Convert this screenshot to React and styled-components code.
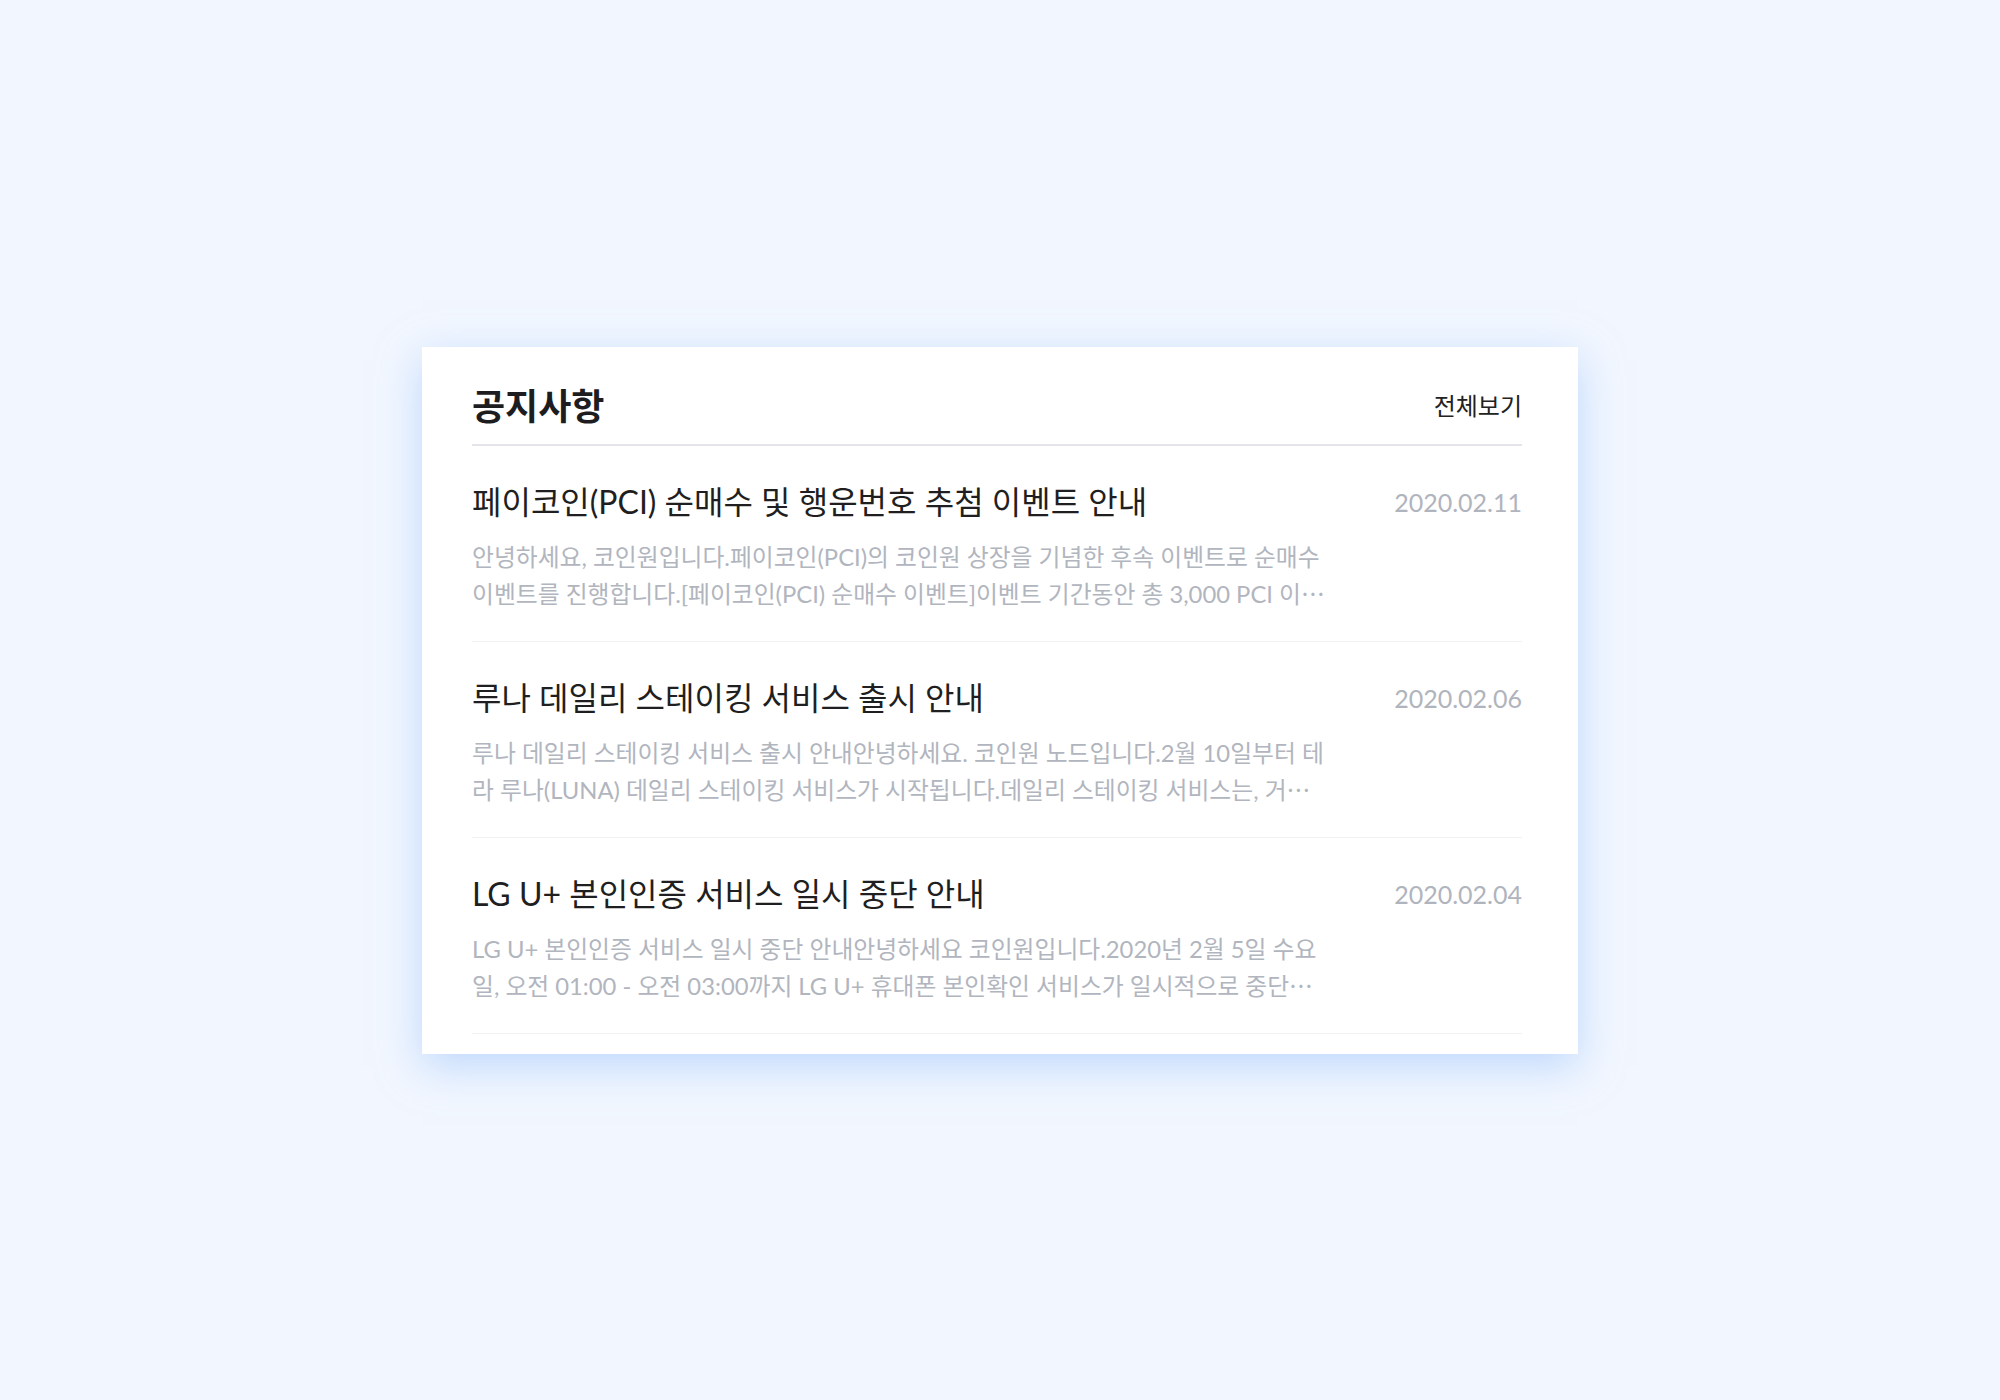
import React from "react";
import styled, { createGlobalStyle } from "styled-components";

const notices = [
  {
    id: 1,
    title: "페이코인(PCI) 순매수 및 행운번호 추첨 이벤트 안내",
    date: "2020.02.11",
    preview:
      "안녕하세요, 코인원입니다.페이코인(PCI)의 코인원 상장을 기념한 후속 이벤트로 순매수 이벤트를 진행합니다.[페이코인(PCI) 순매수 이벤트]이벤트 기간동안 총 3,000 PCI 이",
  },
  {
    id: 2,
    title: "루나 데일리 스테이킹 서비스 출시 안내",
    date: "2020.02.06",
    preview:
      "루나 데일리 스테이킹 서비스 출시 안내안녕하세요. 코인원 노드입니다.2월 10일부터 테라 루나(LUNA) 데일리 스테이킹 서비스가 시작됩니다.데일리 스테이킹 서비스는, 거",
  },
  {
    id: 3,
    title: "LG U+ 본인인증 서비스 일시 중단 안내",
    date: "2020.02.04",
    preview:
      "LG U+ 본인인증 서비스 일시 중단 안내안녕하세요 코인원입니다.2020년 2월 5일 수요일, 오전 01:00 - 오전 03:00까지 LG U+ 휴대폰 본인확인 서비스가 일시적으로 중단",
  },
];

const GlobalStyle = createGlobalStyle`
  * {
    box-sizing: border-box;
  }
  body {
    margin: 0;
    background: #f2f7ff;
    font-family: Lato, "Noto Sans CJK KR", sans-serif;
  }
`;

const Page = styled.div`
  height: 100vh;
  display: flex;
  align-items: center;
  justify-content: center;
`;

const Card = styled.section`
  width: 1156px;
  padding: 0 56px 20px 50px;
  background: #fff;
  box-shadow: 0 12px 40px rgba(140, 185, 250, 0.5);
`;

const Header = styled.header`
  display: flex;
  justify-content: space-between;
  align-items: center;
  padding: 39px 0 18px;
  border-bottom: 2px solid #e4e4eb;
`;

const Heading = styled.h2`
  margin: 0;
  font-size: 36px;
  line-height: 40px;
  font-weight: 700;
  color: #1d1d1f;
`;

const MoreLink = styled.a`
  font-size: 24px;
  line-height: 40px;
  color: #222;
  text-decoration: none;
  cursor: pointer;
`;

const List = styled.ul`
  margin: 0;
  padding: 0;
  list-style: none;
`;

const Item = styled.li`
  padding: 36px 0 29px;
  border-bottom: 1px solid #f2f2f5;
`;

const TitleRow = styled.div`
  display: flex;
  justify-content: space-between;
  align-items: flex-start;
`;

const Title = styled.h3`
  margin: 0;
  font-size: 32px;
  line-height: 40px;
  font-weight: 400;
  color: #1f1f21;
`;

const Date = styled.span`
  font-size: 25px;
  line-height: 40px;
  color: #b0b4bd;
`;

const Summary = styled.p`
  width: 864px;
  margin: 17px 0 0;
  font-size: 23.8px;
  line-height: 36px;
  color: #b1b5be;
  overflow: hidden;
`;

/* the CJK font draws the ellipsis at mid-height */
const More = styled.span`
  font-family: "Noto Sans CJK KR", sans-serif;
`;

export default function App() {
  return (
    <Page>
      <GlobalStyle />
      <Card>
        <Header>
          <Heading>공지사항</Heading>
          <MoreLink>전체보기</MoreLink>
        </Header>
        <List>
          {notices.map((n) => (
            <Item key={n.id}>
              <TitleRow>
                <Title>{n.title}</Title>
                <Date>{n.date}</Date>
              </TitleRow>
              <Summary>
                {n.preview}
                <More>…</More>
              </Summary>
            </Item>
          ))}
        </List>
      </Card>
    </Page>
  );
}
